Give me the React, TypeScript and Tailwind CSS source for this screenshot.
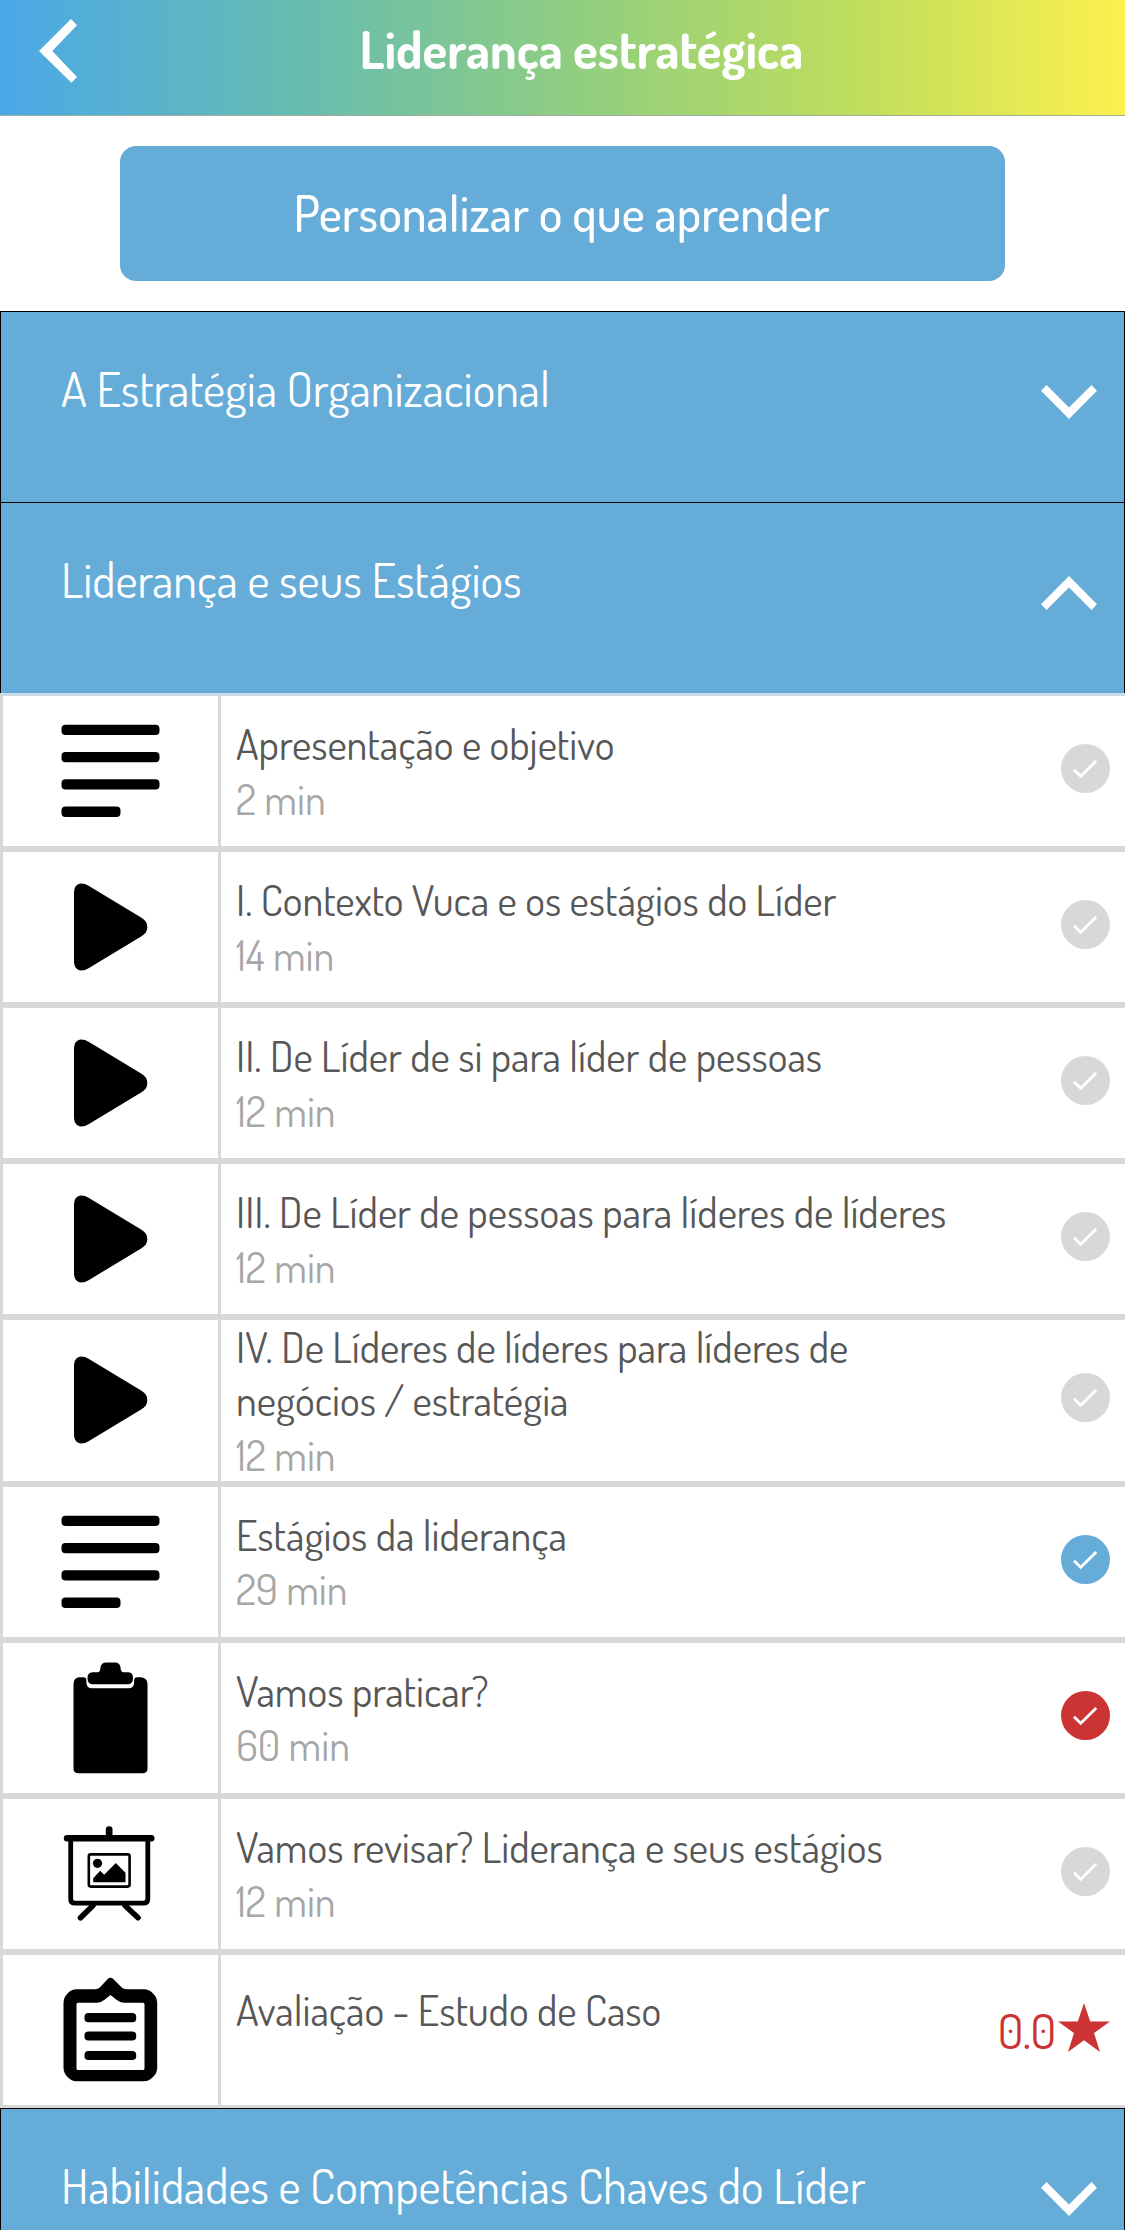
import type { ReactNode } from 'react';

type IconName = 'text' | 'play' | 'clipboard' | 'board' | 'exam';
type Status = 'pending' | 'done' | 'late';

interface Lesson {
  icon: IconName;
  title: string;
  duration?: string;
  status?: Status;
  score?: string;
}

const lessons: Lesson[] = [
  { icon: 'text', title: 'Apresentação e objetivo', duration: '2 min', status: 'pending' },
  { icon: 'play', title: 'I. Contexto Vuca e os estágios do Líder', duration: '14 min', status: 'pending' },
  { icon: 'play', title: 'II. De Líder de si para líder de pessoas', duration: '12 min', status: 'pending' },
  { icon: 'play', title: 'III. De Líder de pessoas para líderes de líderes', duration: '12 min', status: 'pending' },
  { icon: 'play', title: 'IV. De Líderes de líderes para líderes de negócios / estratégia', duration: '12 min', status: 'pending' },
  { icon: 'text', title: 'Estágios da liderança', duration: '29 min', status: 'done' },
  { icon: 'clipboard', title: 'Vamos praticar?', duration: '60 min', status: 'late' },
  { icon: 'board', title: 'Vamos revisar? Liderança e seus estágios', duration: '12 min', status: 'pending' },
  { icon: 'exam', title: 'Avaliação - Estudo de Caso', score: '0.0' },
];

const statusColors: Record<Status, string> = {
  pending: 'text-[#d8d8d8]',
  done: 'text-[#65acd9]',
  late: 'text-[#cc3333]',
};

const icons: Record<IconName, ReactNode> = {
  text: (
    <>
      <rect x="0.5" y="9.7" width="98" height="10.3" rx="4" />
      <rect x="0.5" y="37" width="98" height="10.3" rx="4" />
      <rect x="0.5" y="64.3" width="98" height="10.3" rx="4" />
      <rect x="0.5" y="91.6" width="59" height="10.3" rx="4" />
    </>
  ),
  play: (
    <path d="M13 22C13 16 16 12.5 20 12.5C23 12.5 25 13.3 28 15L80.5 46.7C84.5 49.2 86.3 52 86.3 56C86.3 60 84.5 62.8 80.5 65.3L28 97C25 98.7 23 99.5 20 99.5C16 99.5 13 96 13 90Z" />
  ),
  clipboard: (
    <>
      <path d="M18 15.3H22.5Q25.2 15.3 25.4 18V21Q25.8 26.3 31 26.3H67.5Q72.7 26.3 73.1 21V18Q73.5 15.3 76 15.3H80Q86.5 16 86.5 22V106.5Q86.5 111.3 81.5 111.3H17.5Q12.5 111.3 12.5 106.5V22Q12.5 16 18 15.3Z" />
      <path d="M39.5 5.5Q40 0.5 45.5 0.5H53.5Q59 0.5 59.5 5.5Q59.8 10.3 62.5 10.3H67.5Q72 10.5 72 16Q72 22.3 66.5 22.3H32Q26.5 22.3 26.5 16Q26.5 10.5 31.5 10.3H36.5Q39.3 10 39.5 5.5Z" />
    </>
  ),
  board: (
    <>
      <rect x="2.8" y="17" width="90.7" height="6.5" rx="3.2" />
      <path d="M44.8 20V11.5A3.35 3.35 0 0 1 51.5 11.5V20Z" />
      <path d="M9.7 21V81Q9.7 85.2 14 85.2H82.4Q86.8 85.2 86.8 81V21" fill="none" stroke="currentColor" strokeWidth="4.8" />
      <path d="M32 87.5L19.5 99.7M64 87.5L77 99.7" fill="none" stroke="currentColor" strokeWidth="5.6" strokeLinecap="round" />
      <rect x="27.8" y="36.4" width="40.8" height="32.2" rx="2" fill="none" stroke="currentColor" strokeWidth="2.6" />
      <circle cx="36.5" cy="45.3" r="4.6" />
      <path d="M32.2 64.3V60.3L39.2 52.7L43.2 56.7L54.8 45L64.5 54.7V64.3Z" />
    </>
  ),
  exam: (
    <>
      <path
        fillRule="evenodd"
        d="M15.5 15.3H34Q37 15.3 39 13.3L46.5 5.2Q49.5 2.3 52.5 5.2L60.5 13.3Q62.5 15.3 65.5 15.3H83Q88 15.3 92 19.5Q96.2 23.5 96.2 29V93.5Q96.2 99 92 103Q88 107.2 83 107.2H15.5Q10.5 107.2 6.5 103Q2.5 99 2.5 93.5V29Q2.5 23.5 6.5 19.5Q10.5 15.3 15.5 15.3ZM17 28.7Q15.5 28.7 15.5 30.2V94.5Q15.5 96 17 96H82Q83.5 96 83.5 94.5V30.2Q83.5 28.7 82 28.7H63Q58.5 28.5 55.5 25.8L49.5 21L43.5 25.8Q40.5 28.5 36 28.7Z"
      />
      <rect x="23.5" y="39" width="51.7" height="9.2" rx="3.8" />
      <rect x="23.5" y="57.4" width="51.7" height="9.2" rx="3.8" />
      <rect x="23.5" y="76.9" width="51.7" height="9.2" rx="3.8" />
    </>
  ),
};

function LessonIcon({ name }: { name: IconName }) {
  return (
    <svg width="100" height="112" viewBox="0 0 100 112" fill="currentColor">
      {icons[name]}
    </svg>
  );
}

function StatusCheck({ status }: { status: Status }) {
  return (
    <svg className={`mb-[5px] ${statusColors[status]}`} width="49" height="49" viewBox="0 0 49 49">
      <circle cx="24.5" cy="24.5" r="24.5" fill="currentColor" />
      <path d="M13 25.8L19.7 32.3L35.2 17" fill="none" stroke="white" strokeWidth="2.8" />
    </svg>
  );
}

function Section({ title, open = false }: { title: string; open?: boolean }) {
  return (
    <div className="flex h-[191px] shrink-0 justify-between border-x border-t border-black bg-[#65acd9] pl-[60px] pr-[27px] text-white">
      <h2 className="pt-[46px] text-[48px] leading-[61px]">{title}</h2>
      <svg
        className={`mt-[73px] ${open ? 'rotate-180' : ''}`}
        width="56"
        height="34"
        viewBox="0 0 56 34"
        fill="currentColor"
      >
        <path d="M5.5 0L28 22.5L50.5 0L56 5.7L28 34L0 5.7Z" />
      </svg>
    </div>
  );
}

function LessonRow({ lesson }: { lesson: Lesson }) {
  return (
    <li className="flex min-h-[156px] border-y-[3px] border-l-[3px] border-[#d8d8d8] bg-white first:border-t-[#cbdbe7]">
      <div className="flex w-[218px] items-center border-r-[3px] border-[#d8d8d8] pl-[57.5px]">
        <LessonIcon name={lesson.icon} />
      </div>
      <div className="flex w-[740px] flex-col justify-center pl-[15px] text-[42px] leading-[53.33px]">
        <p className="text-[#575757]">{lesson.title}</p>
        {lesson.duration ? (
          <p className="mt-px text-[#a6a6a6]">{lesson.duration}</p>
        ) : (
          <div className="h-[41px]" />
        )}
      </div>
      <div className="ml-auto flex items-center pr-[15px]">
        {lesson.status && <StatusCheck status={lesson.status} />}
        {lesson.score && (
          <div className="flex items-center text-[#cc3333]">
            <span className="pt-0.5 text-[48px] leading-[61px]">{lesson.score}</span>
            <svg className="mb-[5px] ml-0.5" width="52" height="49" viewBox="0 0 52 49" fill="currentColor">
              <path d="M26 0L32.2 18.5H52L36 30L42 49L26 37.3L10 49L16 30L0 18.5H19.8Z" />
            </svg>
          </div>
        )}
      </div>
    </li>
  );
}

export default function App() {
  return (
    <div className="flex h-[2230px] w-[1125px] flex-col overflow-hidden bg-white font-['Dosis','Open_Sans',sans-serif]">
      {/* Header */}
      <header className="flex h-[116px] shrink-0 border-b border-[#9fae9f] bg-[linear-gradient(90deg,#4ba8e8_0%,#65bbb3_25%,#8ecd82_50%,#bcdd5e_75%,#fdf04d_100%)] text-white">
        <button className="w-[120px] pl-[39px]">
          <svg className="mb-[13px]" width="38" height="64" viewBox="0 0 38 64" fill="currentColor">
            <path d="M32 0L38 6.3L13.3 32L38 58L32.4 63.7L0 32Z" />
          </svg>
        </button>
        <h1 className="flex-1 pt-[19px] pr-[82px] text-center text-[51px] leading-[61px] font-bold">
          Liderança estratégica
        </h1>
      </header>

      {/* Customize */}
      <div className="flex h-[195px] shrink-0 justify-center pt-[30px]">
        <button className="h-[135px] w-[885px] rounded-[16px] bg-[#65acd9] pr-0.5 text-[49.5px] font-medium text-white">
          Personalizar o que aprender
        </button>
      </div>

      {/* Course sections */}
      <Section title="A Estratégia Organizacional" />
      <Section title="Liderança e seus Estágios" open />
      <ul className="shrink-0">
        {lessons.map((lesson) => (
          <LessonRow key={lesson.title} lesson={lesson} />
        ))}
      </ul>
      <Section title="Habilidades e Competências Chaves do Líder" />
    </div>
  );
}
